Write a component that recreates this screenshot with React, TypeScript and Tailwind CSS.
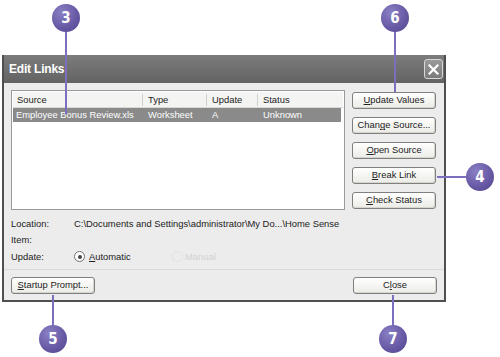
import React from 'react';

const callouts = [
  { n: '3', x: 66, y: 18 },
  { n: '6', x: 395, y: 18 },
  { n: '4', x: 480, y: 177 },
  { n: '5', x: 53, y: 339 },
  { n: '7', x: 393, y: 339 },
];

function Btn({ label, u, w = 'w-[84px]' }: { label: string; u: number; w?: string }) {
  return (
    <div className={`${w} h-[17px] rounded-[3px] border border-[#7f7f7f] bg-gradient-to-b from-white to-[#ebebe6] shadow-[inset_-1px_-1px_0_#d6d6ce] flex items-center justify-center text-[9.4px] text-[#222]`}>
      <span>
        {label.slice(0, u)}
        <span className="underline">{label[u]}</span>
        {label.slice(u + 1)}
      </span>
    </div>
  );
}

export default function App() {
  return (
    <div className="relative w-[500px] h-[357px] bg-white overflow-hidden font-['Liberation_Sans',sans-serif]">
      <div className="pt-[55px] pl-[2px]">
        <div className="w-[444px] h-[247px] border-2 border-t-0 border-[#4f4f4f] bg-[#ececec] flex flex-col">
          {/* title bar */}
          <div className="h-[28px] bg-gradient-to-b from-[#7c7c7c] to-[#636363] flex items-center justify-between pl-[5px] pr-[1px]">
            <span className="text-white font-bold text-[12px] tracking-[-0.2px]">Edit Links</span>
            <div className="w-[19px] h-[20px] rounded-[3px] border border-[#d8d8d8] bg-gradient-to-b from-[#9a9a9a] to-[#7a7a7a] flex items-center justify-center">
              <svg width="11" height="11" viewBox="0 0 11 11">
                <path d="M1.5 1.5 L9.5 9.5 M9.5 1.5 L1.5 9.5" stroke="white" strokeWidth="2.2" strokeLinecap="square" />
              </svg>
            </div>
          </div>
          {/* body */}
          <div className="flex-1 flex flex-col px-[7px] pt-[7px] pb-[6px] text-[9.4px] text-[#222]">
            <div className="flex gap-[7px]">
              <div className="w-[334px] h-[120px] border border-[#9a9a9a] bg-white p-px">
                <div className="flex h-[16px] items-center bg-[#f4f4f2] border-b border-[#d8d8d4]">
                  <div className="w-[130px] pl-[4px] border-r border-[#cfcfcf] h-[12px] leading-[12px]">Source</div>
                  <div className="w-[64px] pl-[5px] border-r border-[#cfcfcf] h-[12px] leading-[12px]">Type</div>
                  <div className="w-[51px] pl-[5px] border-r border-[#cfcfcf] h-[12px] leading-[12px]">Update</div>
                  <div className="flex-1 pl-[5px] h-[12px] leading-[12px]">Status</div>
                </div>
                <div className="flex h-[14px] items-center bg-[#8a8a8a] text-white mr-[2px]">
                  <div className="w-[130px] pl-[3px]">Employee Bonus Review.xls</div>
                  <div className="w-[64px] pl-[5px]">Worksheet</div>
                  <div className="w-[51px] pl-[5px]">A</div>
                  <div className="flex-1 pl-[5px]">Unknown</div>
                </div>
              </div>
              <div className="flex flex-col gap-[8px] pt-[2px]">
                <Btn label="Update Values" u={0} />
                <Btn label="Change Source..." u={4} />
                <Btn label="Open Source" u={0} />
                <Btn label="Break Link" u={0} />
                <Btn label="Check Status" u={0} />
              </div>
            </div>
            <div className="mt-[6px] flex flex-col">
              <div className="flex h-[16px] items-center">
                <span className="w-[63px]">Location:</span>
                <span>C:\Documents and Settings\administrator\My Do...\Home Sense</span>
              </div>
              <div className="flex h-[16px] items-center">
                <span className="w-[63px]">Item:</span>
              </div>
              <div className="flex h-[18px] items-center">
                <span className="w-[63px]">Update:</span>
                <div className="flex items-center w-[98px]">
                  <div className="w-[11px] h-[11px] rounded-full border border-[#6f6f6f] bg-white flex items-center justify-center">
                    <div className="w-[4px] h-[4px] rounded-full bg-[#444]" />
                  </div>
                  <span className="ml-[4px]"><span className="underline">A</span>utomatic</span>
                </div>
                <div className="flex items-center text-[#d2d2d2]">
                  <div className="w-[11px] h-[11px] rounded-full border border-[#e2e2e2]" />
                  <span className="ml-[2px]">Manual</span>
                </div>
              </div>
            </div>
            <div className="mt-[3px] h-px bg-[#dadada] -mx-[7px]" />
            <div className="mt-auto flex justify-between">
              <Btn label="Startup Prompt..." u={0} />
              <Btn label="Close" u={1} />
            </div>
          </div>
        </div>
      </div>

      {/* callout lines */}
      <div className="absolute left-[65px] top-[30px] w-[2px] h-[84px] bg-[#7d6fbf]" />
      <div className="absolute left-[394px] top-[30px] w-[2px] h-[62px] bg-[#7d6fbf]" />
      <div className="absolute left-[437px] top-[176px] w-[32px] h-[2px] bg-[#7d6fbf]" />
      <div className="absolute left-[52px] top-[295px] w-[2px] h-[32px] bg-[#7d6fbf]" />
      <div className="absolute left-[392px] top-[295px] w-[2px] h-[32px] bg-[#7d6fbf]" />

      {callouts.map((c) => (
        <div
          key={c.n}
          className="absolute w-[28px] h-[28px] rounded-full bg-[radial-gradient(circle_at_35%_30%,#8a7fc4,#6657a3_60%,#54468f)] flex items-center justify-center text-white font-bold text-[15px] font-['DejaVu_Sans_Condensed',sans-serif]"
          style={{ left: c.x - 14, top: c.y - 14 }}
        >
          {c.n}
        </div>
      ))}
    </div>
  );
}
